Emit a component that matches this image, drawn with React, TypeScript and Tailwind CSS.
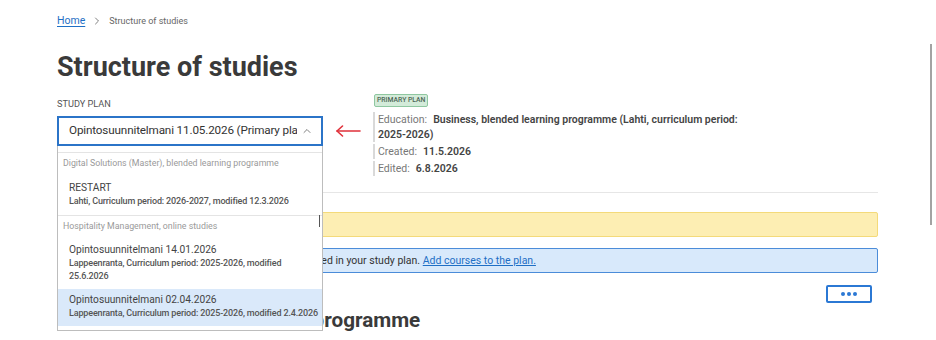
import { ChevronRight, ChevronUp, Info } from 'lucide-react';

interface PlanOption {
  title: string;
  details: string[];
  active?: boolean;
}

interface PlanGroup {
  label: string;
  options: PlanOption[];
}

const groups: PlanGroup[] = [
  {
    label: 'Digital Solutions (Master), blended learning programme',
    options: [
      { title: 'RESTART', details: ['Lahti, Curriculum period: 2026-2027, modified 12.3.2026'] },
    ],
  },
  {
    label: 'Hospitality Management, online studies',
    options: [
      {
        title: 'Opintosuunnitelmani 14.01.2026',
        details: ['Lappeenranta, Curriculum period: 2025-2026, modified', '25.6.2026'],
      },
      {
        title: 'Opintosuunnitelmani 02.04.2026',
        details: ['Lappeenranta, Curriculum period: 2025-2026, modified 2.4.2026'],
        active: true,
      },
    ],
  },
];

function PlanDropdown() {
  return (
    <div className="absolute left-0 top-full z-10 h-[185px] w-[266px] overflow-hidden border border-t-0 border-[#bdbdbd] bg-white pt-[6px]">
      {groups.map((group, gi) => (
        <div key={group.label} className="border-t border-[#e4e4e4]">
          <div className="flex h-[22px] items-center pl-[5px] text-[8.8px] text-[#9a9a9a] whitespace-nowrap">
            {group.label}
          </div>
          {group.options.map((option) => (
            <div
              key={option.title}
              className={`pl-[11px] ${option.active ? 'bg-[#dae9fa] pt-[4px] pb-[6px]' : gi === 0 ? 'pt-[6px] pb-[7px]' : 'pt-[5px] pb-[6px]'}`}
            >
              <div className="text-[10.2px] leading-[14px] text-[#444] whitespace-nowrap">{option.title}</div>
              {option.details.map((line) => (
                <div key={line} className="text-[9px] font-medium leading-[13px] tracking-[-0.15px] text-[#555] whitespace-nowrap">
                  {line}
                </div>
              ))}
            </div>
          ))}
        </div>
      ))}
      {/* list scrollbar thumb */}
      <div className="absolute right-[2px] top-[69px] h-[12px] w-px bg-[#555]" />
    </div>
  );
}

function InfoRow({ label, children }: { label: string; children: React.ReactNode }) {
  return (
    <div className="border-l-2 border-[#d9d9d9] pl-[3px] text-[10.5px] leading-[15px]">
      <span className="text-[#777]">{label}:</span>
      <span className="ml-[6px] font-semibold text-[#444]">{children}</span>
    </div>
  );
}

export default function App() {
  return (
    <div className="relative h-[340px] w-[936px] overflow-hidden bg-white font-['Roboto',sans-serif] text-[#333]">
      <div className="ml-[57px] w-[821px]">
        <nav className="flex h-[28px] items-center pt-[14px] leading-[14px]">
          <a href="#" className="text-[10.5px] text-[#1f6fc5] underline underline-offset-2">
            Home
          </a>
          <ChevronRight className="mx-[6px] h-[12px] w-[12px] text-[#555]" strokeWidth={1.5} />
          <span className="text-[9px] text-[#666]">Structure of studies</span>
        </nav>

        <h1 className="mt-[22px] text-[27px] font-bold leading-[34px] text-[#3a3a3a]">Structure of studies</h1>

        <div className="mt-[10px] flex items-start">
          <div className="relative w-[266px] pt-[4px]">
            <div className="text-[9.2px] leading-[12px] uppercase text-[#555]">Study plan</div>
            <button className="mt-[6px] flex h-[30px] w-full items-center border-2 border-[#2b74c8] bg-white pl-[10px] pr-[8px] text-left text-[11.7px] tracking-[-0.15px] text-[#333]">
              <span className="flex-1 overflow-hidden whitespace-nowrap">Opintosuunnitelmani 11.05.2026 (Primary plan)</span>
              <ChevronUp className="ml-[4px] h-[12px] w-[12px] text-[#555]" strokeWidth={1.5} />
            </button>
            <PlanDropdown />
          </div>

          <div className="w-[50px] pl-[12px] pt-[31px]">
            <svg width="26" height="12" viewBox="0 0 26 12" fill="none" stroke="#e0303a" strokeWidth="1.6" strokeLinecap="round" strokeLinejoin="round">
              <path d="M25 6H2" />
              <path d="M7.5 1L2 6l5.5 5" />
            </svg>
          </div>

          <div className="w-[370px]">
            <div className="flex">
              <span className="ml-[1px] block h-[13px] rounded-[2px] border border-[#8fc7a0] bg-[#d3ebd9] px-[2px] text-[6.8px] font-medium leading-[11px] text-[#4d6656] uppercase">
                Primary plan
              </span>
            </div>
            <div className="mt-[5px]">
              <InfoRow label="Education">Business, blended learning programme (Lahti, curriculum period: 2025-2026)</InfoRow>
            </div>
            <div className="mt-[2px]">
              <InfoRow label="Created">11.5.2026</InfoRow>
            </div>
            <div className="mt-[2px]">
              <InfoRow label="Edited">6.8.2026</InfoRow>
            </div>
          </div>
        </div>

        <div className="mt-[16px] h-px bg-[#e6e6e6]" />

        <div className="mt-[19px] flex h-[25px] items-center rounded-[2px] border border-[#f4da7a] bg-[#fdeeb3] pl-[12px] text-[10.5px]">
          Changes saved.
        </div>

        <div className="mt-[11px] flex h-[25px] items-center rounded-[2px] border border-[#4b8cd9] bg-[#d8e9fb] pl-[10px] text-[10.5px] text-[#333]">
          <Info className="mr-[12px] h-[14px] w-[14px] text-[#2b78d4]" />
          There are currently no courses or modules included in your study plan.&nbsp;
          <a href="#" className="text-[#1f6fc5] underline">
            Add courses to the plan.
          </a>
        </div>

        <div className="mt-[12px] flex justify-end pr-[6px]">
          <button className="flex h-[18px] w-[46px] items-center justify-center gap-[2px] rounded-[2px] border-2 border-[#2b78d4] bg-white">
            <span className="h-[4px] w-[4px] rounded-full bg-[#2b78d4]" />
            <span className="h-[4px] w-[4px] rounded-full bg-[#2b78d4]" />
            <span className="h-[4px] w-[4px] rounded-full bg-[#2b78d4]" />
          </button>
        </div>

        <h2 className="mt-[3px] text-[20.7px] font-bold leading-[28px] text-[#3a3a3a]">
          Business, blended learning programme
        </h2>
      </div>

      {/* page scrollbar */}
      <div className="absolute left-[930px] top-[44px] h-[181px] w-[2px] bg-[#a3a3a3]" />
    </div>
  );
}
